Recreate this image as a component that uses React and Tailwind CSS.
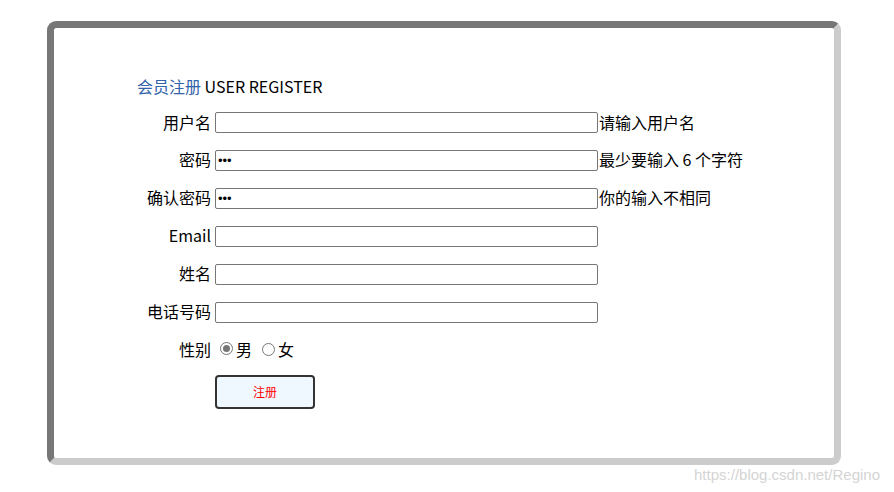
import React from "react";

const font = { fontFamily: '"Noto Sans CJK SC", "Noto Sans", sans-serif' };

function Row({ label, value = "", hint, first }) {
  return (
    <div className={`flex items-center ${first ? "h-[37px]" : "h-[38px]"}`}>
      <div className="w-[74px] text-right text-[16px] leading-[22px] text-black">{label}</div>
      <input
        type="text"
        defaultValue={value}
        readOnly
        className="ml-[4px] mt-[2px] h-[21px] w-[383px] rounded-[2px] border border-[#767676] bg-white px-[2px] text-[13px] leading-[17px] text-black outline-none"
        style={{ fontFamily: '"Liberation Sans", Arial, sans-serif' }}
      />
      {hint && <span className="ml-[1px] text-[16px] leading-[22px] text-black">{hint}</span>}
    </div>
  );
}

function Radio({ checked }) {
  return (
    <span className="inline-flex h-[13px] w-[13px] items-center justify-center rounded-full border border-[#767676] bg-white">
      {checked && <span className="h-[7px] w-[7px] rounded-full bg-[#767676]" />}
    </span>
  );
}

export default function App() {
  return (
    <div className="relative h-[492px] w-[894px] bg-white pl-[47px] pt-[21px]" style={font}>
      <div className="h-[444px] w-[794px] rounded-[9px] border-[7px] border-t-[#777777] border-l-[#777777] border-r-[#cccccc] border-b-[#cccccc] bg-white pl-[83px] pt-[47px]">
        <div className="mb-[6px] text-[16px] leading-[22px] text-black">
          <span className="text-[#3363aa]">会员注册</span> USER REGISTER
        </div>
        <Row first label="用户名" hint="请输入用户名" />
        <Row label="密码" value="•••" hint={"最少要输入\u00a06\u00a0个字符"} />
        <Row label="确认密码" value="•••" hint="你的输入不相同" />
        <Row label="Email" />
        <Row label="姓名" />
        <Row label="电话号码" />
        <div className="flex h-[37px] items-center">
          <div className="w-[74px] text-right text-[16px] leading-[22px] text-black">性别</div>
          <div className="ml-[9px] flex items-center text-[16px] leading-[22px] text-black">
            <Radio checked />
            <span className="ml-[3px]">男</span>
            <span className="ml-[10px]"><Radio /></span>
            <span className="ml-[3px]">女</span>
          </div>
        </div>
        <div className="ml-[78px] mt-[8px]">
          <button className="flex h-[34px] w-[100px] items-center justify-center rounded-[4px] border-2 border-[#333333] bg-[#f0f8ff] text-[12px] text-[#ff0000]">
            注册
          </button>
        </div>
      </div>
      <div
        className="absolute bottom-[8px] right-[14px] text-[15px] leading-[18px] text-[#d4d4d4]"
        style={{ fontFamily: '"Liberation Sans", Arial, sans-serif' }}
      >
        https://blog.csdn.net/Regino
      </div>
    </div>
  );
}
